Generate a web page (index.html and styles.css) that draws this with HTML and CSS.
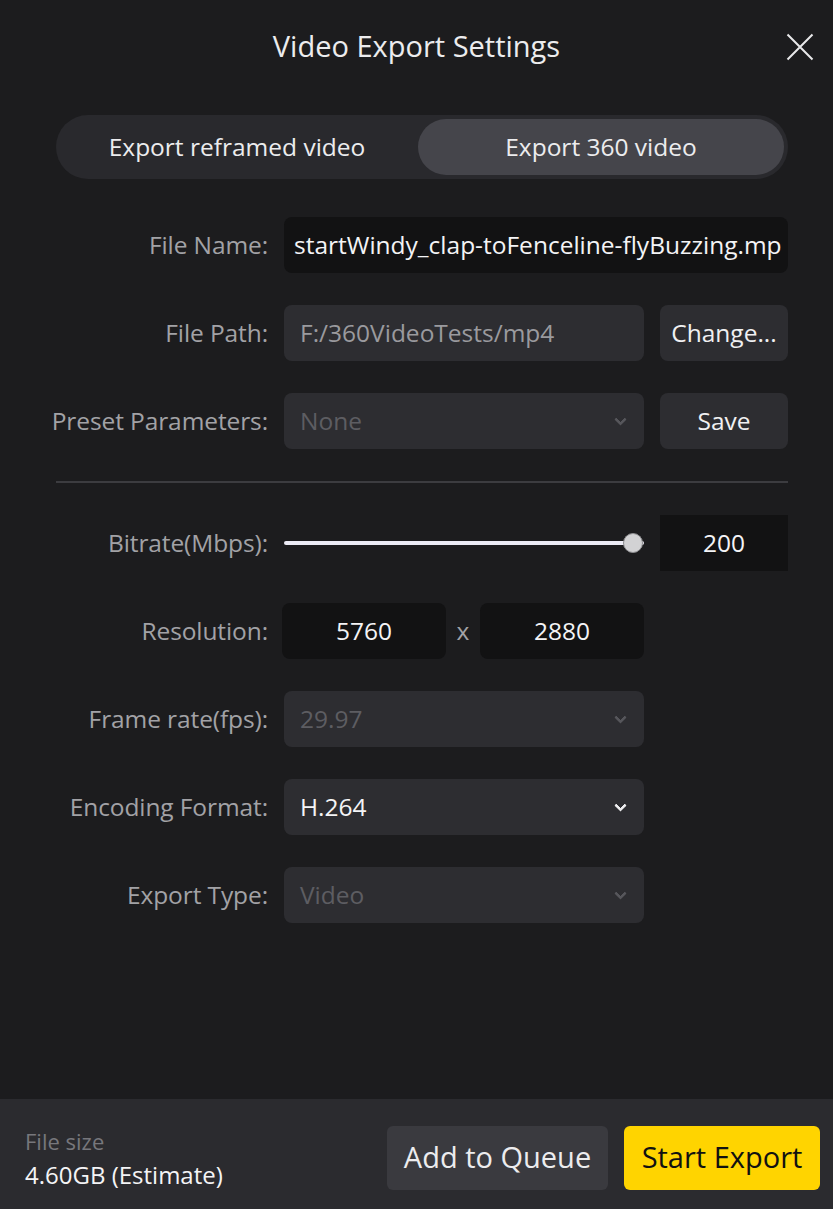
FILE: index.html
```html
<!DOCTYPE html>
<html>
<head>
<meta charset="utf-8">
<link rel="stylesheet" href="styles.css">
</head>
<body>
<div class="dialog">
  <header class="head">
    <h1 class="title">Video Export Settings</h1>
    <button class="close" aria-label="Close">
      <svg width="28" height="28" viewBox="0 0 28 28"><path d="M1.5 1.5 L26.5 26.5 M26.5 1.5 L1.5 26.5" stroke="#e8e8ea" stroke-width="2" fill="none"/></svg>
    </button>
  </header>

  <div class="seg">
    <div class="seg-item">Export reframed video</div>
    <div class="seg-item active">Export 360 video</div>
  </div>

  <div class="form">
    <div class="row">
      <label class="lbl">File Name:</label>
      <div class="field input dark wide"><span class="val clip">startWindy_clap-toFenceline-flyBuzzing.mp4</span></div>
    </div>
    <div class="row">
      <label class="lbl">File Path:</label>
      <div class="field input grey"><span class="val muted">F:/360VideoTests/mp4</span></div>
      <button class="btn">Change...</button>
    </div>
    <div class="row">
      <label class="lbl">Preset Parameters:</label>
      <div class="field select grey"><span class="val disabled">None</span><span class="chev dim"></span></div>
      <button class="btn">Save</button>
    </div>

    <div class="divider"></div>

    <div class="row">
      <label class="lbl">Bitrate(Mbps):</label>
      <div class="slider"><div class="track"></div><div class="thumb"></div></div>
      <div class="numbox">200</div>
    </div>
    <div class="row">
      <label class="lbl">Resolution:</label>
      <div class="res">
        <div class="resbox">5760</div>
        <span class="times">x</span>
        <div class="resbox">2880</div>
      </div>
    </div>
    <div class="row">
      <label class="lbl">Frame rate(fps):</label>
      <div class="field select grey"><span class="val disabled">29.97</span><span class="chev dim"></span></div>
    </div>
    <div class="row">
      <label class="lbl">Encoding Format:</label>
      <div class="field select grey"><span class="val">H.264</span><span class="chev"></span></div>
    </div>
    <div class="row">
      <label class="lbl">Export Type:</label>
      <div class="field select grey"><span class="val disabled">Video</span><span class="chev dim"></span></div>
    </div>
  </div>

  <footer class="foot">
    <div class="size">
      <div class="size-lbl">File size</div>
      <div class="size-val">4.60GB (Estimate)</div>
    </div>
    <div class="actions">
      <button class="fbtn queue">Add to Queue</button>
      <button class="fbtn start">Start Export</button>
    </div>
  </footer>
</div>
</body>
</html>
```

FILE: styles.css
```css
* { box-sizing: border-box; }
html, body {
  margin: 0;
  padding: 0;
  background: #1c1c1e;
}
body {
  font-family: "Open Sans", "Noto Sans", sans-serif;
  color: #f0f0f2;
}
.dialog {
  width: 833px;
  height: 1209px;
  display: flex;
  flex-direction: column;
  background: #1c1c1e;
}
.head {
  height: 94px;
  display: flex;
  align-items: center;
  justify-content: center;
  position: relative;
}
.title {
  margin: 0;
  font-weight: 400;
  font-size: 29px;
  color: #ececee;
  padding-bottom: 4px;
}
.close {
  position: absolute;
  right: 19px;
  top: 33px;
  width: 28px;
  height: 28px;
  padding: 0;
  border: 0;
  background: none;
  display: flex;
}
.seg {
  margin: 21px 45px 0 56px;
  height: 64px;
  border-radius: 32px;
  background: #29292d;
  padding: 4px;
  display: flex;
}
.seg-item {
  flex: 1;
  display: flex;
  align-items: center;
  justify-content: center;
  font-size: 24.5px;
  color: #ececee;
  border-radius: 28px;
  padding-bottom: 1px;
}
.seg-item:first-child { padding-right: 4px; }
.seg-item.active {
  background: #45454b;
  flex: 0 0 366px;
}
.form {
  padding: 38px 45px 0 0;
  display: flex;
  flex-direction: column;
  gap: 32px;
}
.row {
  display: flex;
  align-items: center;
  height: 56px;
}
.lbl {
  width: 268px;
  flex: 0 0 268px;
  text-align: right;
  margin-right: 16px;
  font-size: 24.5px;
  letter-spacing: -0.1px;
  color: #a2a2a6;
  white-space: nowrap;
  padding-bottom: 2px;
}
.field {
  height: 56px;
  border-radius: 8px;
  display: flex;
  align-items: center;
  padding: 0 16px 2px;
  width: 360px;
  flex: 0 0 360px;
  position: relative;
}
.field.wide {
  width: 504px;
  flex: 0 0 504px;
  padding: 0 7px 2px 10px;
}
.dark { background: #121213; }
.grey { background: #2d2d31; }
.val {
  font-size: 24.5px;
  color: #f4f4f6;
  white-space: nowrap;
}
.clip {
  overflow: hidden;
  display: block;
  width: 100%;
}
.muted { color: #9a9a9e; }
.disabled { color: #5d5d62; }
.chev {
  position: absolute;
  right: 19px;
  top: 22px;
  width: 9px;
  height: 9px;
  border-right: 3px solid #ececee;
  border-bottom: 3px solid #ececee;
  transform: rotate(45deg);
  border-radius: 1px;
}
.chev.dim {
  border-color: #56565b;
}
.btn {
  margin-left: 16px;
  width: 128px;
  height: 56px;
  border: 0;
  border-radius: 8px;
  background: #2d2d31;
  color: #f0f0f2;
  font-family: inherit;
  font-size: 24.5px;
  padding: 0 0 2px;
  white-space: nowrap;
}
.divider {
  margin-left: 56px;
  height: 2px;
  background: #3c3c40;
}
.slider {
  width: 360px;
  flex: 0 0 360px;
  height: 24px;
  position: relative;
  display: flex;
  align-items: center;
}
.track {
  width: 100%;
  height: 4px;
  background: #ecebf5;
  border-radius: 2px;
}
.thumb {
  position: absolute;
  right: 1px;
  top: 2px;
  width: 20px;
  height: 20px;
  border-radius: 50%;
  background: #d2d2d4;
  border: 1.5px solid #8d8d90;
}
.numbox {
  margin-left: 16px;
  width: 128px;
  height: 56px;
  background: #121213;
  display: flex;
  align-items: center;
  justify-content: center;
  font-size: 24.5px;
  color: #f4f4f6;
  padding-bottom: 2px;
}
.res {
  display: flex;
  align-items: center;
  margin-left: -2px;
}
.resbox {
  width: 164px;
  height: 56px;
  border-radius: 8px;
  background: #121213;
  display: flex;
  align-items: center;
  justify-content: center;
  font-size: 24.5px;
  color: #f4f4f6;
  padding-bottom: 2px;
}
.times {
  width: 34px;
  text-align: center;
  font-size: 24.5px;
  color: #a2a2a6;
  padding-bottom: 2px;
}
.foot {
  margin-top: auto;
  height: 110px;
  background: #2b2b2f;
  display: flex;
  align-items: center;
  justify-content: space-between;
  padding: 8px 13px 0 25px;
}
.size {
  display: flex;
  flex-direction: column;
  gap: 2px;
}
.size-lbl {
  font-size: 22px;
  color: #77777c;
}
.size-val {
  font-size: 24px;
  color: #f4f4f6;
}
.actions {
  display: flex;
  gap: 16px;
}
.fbtn {
  height: 64px;
  border: 0;
  border-radius: 6px;
  font-family: inherit;
  font-size: 29px;
  padding: 0 0 4px;
  white-space: nowrap;
}
.queue {
  width: 221px;
  background: #3a3a3f;
  color: #ececee;
}
.start {
  width: 196px;
  background: #ffd400;
  color: #111;
}
```
